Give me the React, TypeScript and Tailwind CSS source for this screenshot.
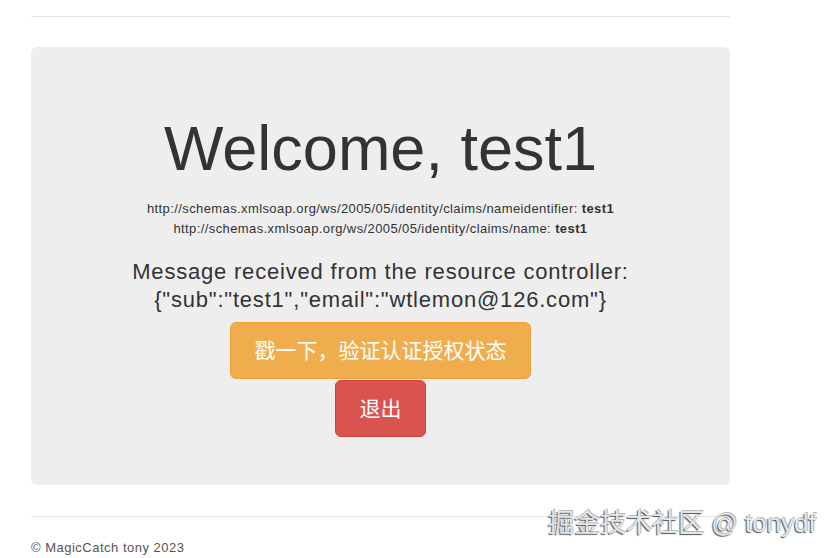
const sans = "font-['Liberation_Sans','Arial','Noto_Sans_CJK_SC',sans-serif]";

export default function App() {
  return (
    <div className={`relative min-h-[558px] bg-white text-[#333] ${sans}`}>
      <div className="ml-[31px] w-[699px] pt-[16px]">
        <hr className="border-0 border-t border-[#e5e5e5]" />

        {/* Jumbotron */}
        <div className="mt-[30px] flex flex-col items-center rounded-[6px] bg-[#eeeeee] pt-[67px] pb-[48px] text-center">
          <h1 className="text-[63px] leading-[1.1] font-normal">Welcome, test1</h1>

          <div className="mt-[16px] text-[13px] leading-[20px] tracking-[0.4px]">
            <div>
              http://schemas.xmlsoap.org/ws/2005/05/identity/claims/nameidentifier: <b>test1</b>
            </div>
            <div>
              http://schemas.xmlsoap.org/ws/2005/05/identity/claims/name: <b>test1</b>
            </div>
          </div>

          <p className="mt-[19px] text-[22px] leading-[28px] tracking-[0.8px]">
            Message received from the resource controller:
            <br />
            {'{"sub":"test1","email":"wtlemon@126.com"}'}
          </p>

          <button className="mt-[8px] flex h-[57px] w-[301px] items-center justify-center rounded-[6px] border border-[#eea236] bg-[#f0ad4e] text-[21px] text-white">
            戳一下，验证认证授权状态
          </button>
          <button className="mt-[1px] flex h-[57px] w-[91px] items-center justify-center rounded-[6px] border border-[#d43f3a] bg-[#d9534f] text-[21px] text-white">
            退出
          </button>
        </div>

        <hr className="mt-[31px] border-0 border-t border-[#e5e5e5]" />
        <footer className="pt-[22px] text-[13px] leading-[18px] tracking-[0.5px] text-[#555]">© MagicCatch tony 2023</footer>
      </div>

      {/* Watermark */}
      <div className="absolute top-[507px] left-[548px] text-[26px] leading-[32px] whitespace-nowrap text-[#e6e6e6] [text-shadow:-1px_1px_1px_#555,1px_-1px_0_#bbb]">
        掘金技术社区 @ tonydf
      </div>
    </div>
  );
}
